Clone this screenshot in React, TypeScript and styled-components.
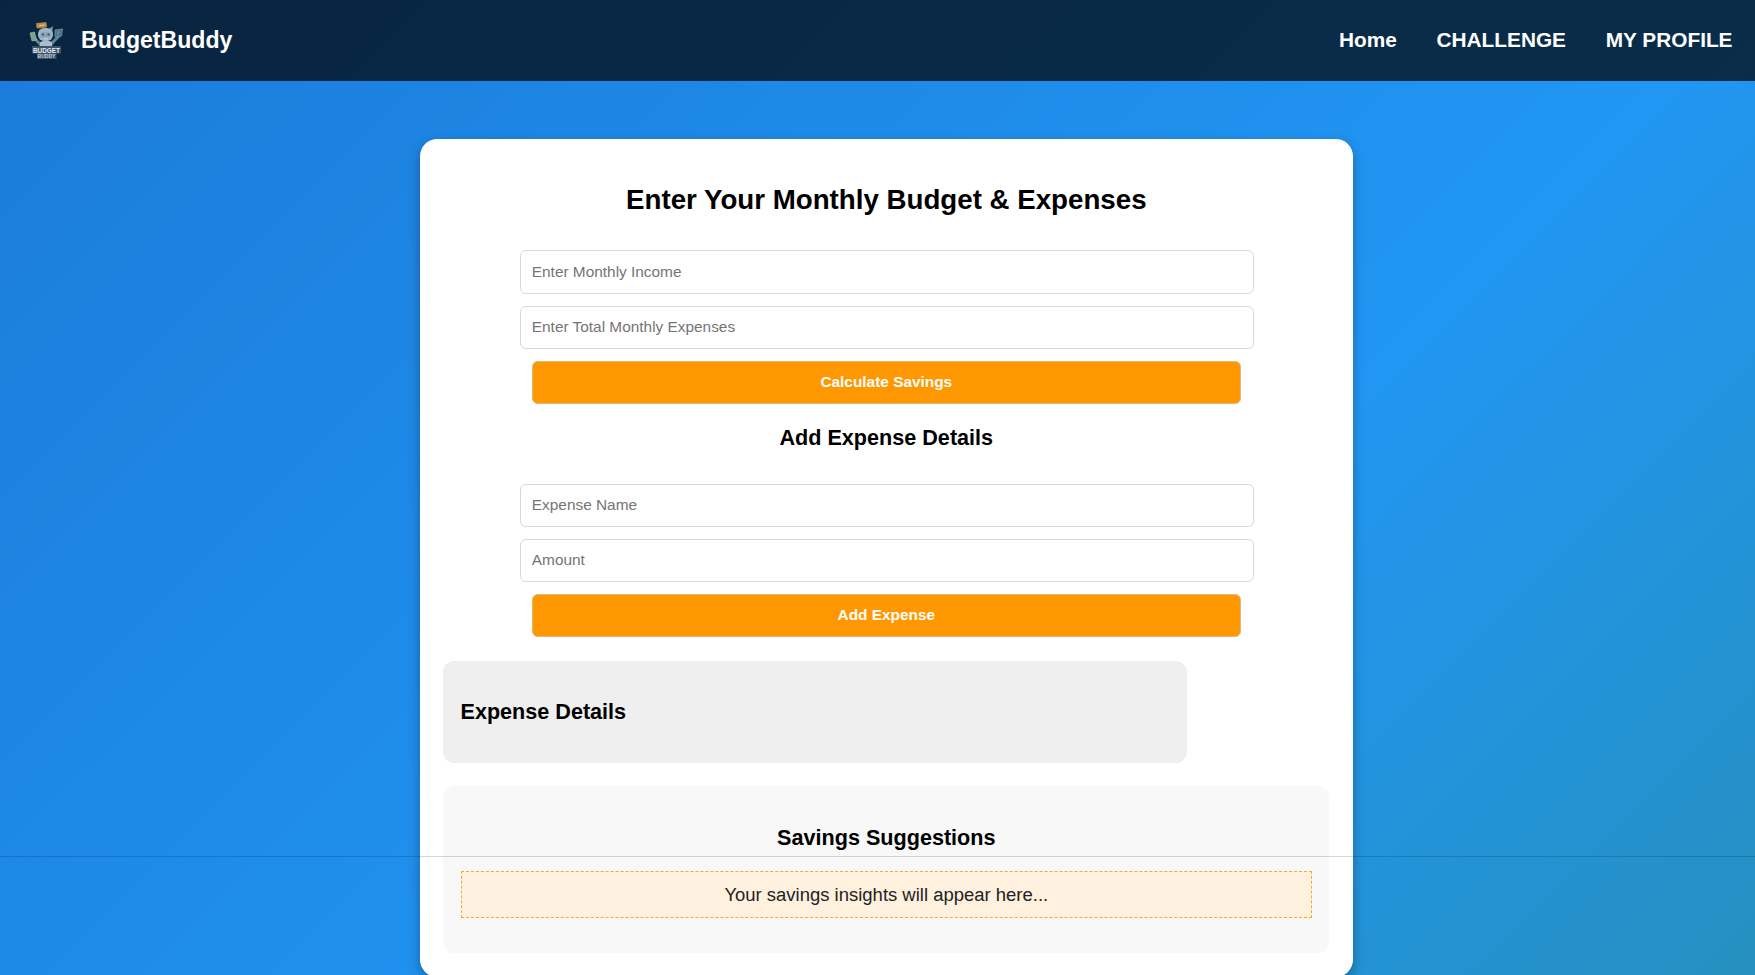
import React from "react";
import styled, { createGlobalStyle } from "styled-components";

const GlobalStyle = createGlobalStyle`
  html, body { margin: 0; padding: 0; }
  body {
    height: 975px;
    overflow: hidden;
    font-family: "Liberation Sans", Arial, sans-serif;
  }
`;

const Page = styled.div`
  position: relative;
  height: 975px;
  overflow: hidden;
  background: linear-gradient(135deg, #1b7bda 0%, #2196f3 64%, #2590c0 100%);
`;

const Navbar = styled.nav`
  display: flex;
  align-items: center;
  justify-content: space-between;
  box-sizing: border-box;
  height: 81px;
  padding: 0 22.5px 0 28px;
  background: rgba(0, 0, 0, 0.7);
`;

const Brand = styled.div`
  display: flex;
  align-items: center;
  gap: 17px;
`;

const BrandName = styled.span`
  padding-bottom: 2px;
  color: #fff;
  font-size: 23.1px;
  font-weight: 700;
  line-height: 26px;
`;

const NavLinks = styled.div`
  display: flex;
  gap: 39.8px;
  padding-bottom: 2px;
`;

const NavLink = styled.a`
  color: #fff;
  font-size: 20.8px;
  font-weight: 700;
  line-height: 24px;
  text-decoration: none;
`;

const Card = styled.main`
  display: flex;
  flex-direction: column;
  box-sizing: border-box;
  width: 932.6px;
  height: 838px;
  margin: 57.5px 0 0 420px;
  padding: 45.5px 23.2px 23px;
  border-radius: 17.3px;
  background: #fff;
  box-shadow: 0 5px 12px rgba(0, 0, 0, 0.3);
`;

const Title = styled.h2`
  margin: 0;
  font-size: 27.7px;
  line-height: 32px;
  text-align: center;
`;

const Subtitle = styled.h3`
  margin: 0;
  font-size: 21.6px;
  line-height: 25px;
`;

const Form = styled.form<{ $top: number }>`
  display: flex;
  flex-direction: column;
  align-items: center;
  gap: 11.6px;
  margin-top: ${(p) => p.$top}px;
`;

const Input = styled.input`
  box-sizing: border-box;
  width: 734px;
  height: 43.6px;
  margin-left: 1px;
  padding: 0 11px 1px;
  border: 1px solid #d8d8d8;
  border-radius: 5.8px;
  background: #fff;
  font-family: inherit;
  font-size: 15.4px;
  &::placeholder { color: #757575; }
`;

const Button = styled.button`
  box-sizing: border-box;
  width: 709px;
  height: 43.4px;
  padding: 0 0 1px;
  border: 1px solid #e0b878;
  border-radius: 5.8px;
  background: #ff9800;
  color: #fff;
  font-family: inherit;
  font-size: 15.4px;
  font-weight: 700;
`;

const SectionHeading = styled(Subtitle)`
  margin-top: 21px;
  text-align: center;
`;

const ExpensePanel = styled.section`
  display: flex;
  align-items: center;
  box-sizing: border-box;
  width: 744px;
  height: 102.4px;
  margin-top: 23.6px;
  padding: 0 17.3px 0.6px;
  border-radius: 11.5px;
  background: #efefef;
`;

const SuggestionPanel = styled.section`
  box-sizing: border-box;
  height: 167px;
  margin-top: 23.1px;
  padding: 38.3px 17.6px 0;
  border-radius: 11.5px;
  background: #f8f8f8;
  text-align: center;
`;

const Insight = styled.p`
  box-sizing: border-box;
  height: 47px;
  margin: 21px 0 0;
  border: 1px dashed #f0ab3c;
  background: #fff1de;
  color: #222;
  font-size: 18.48px;
  line-height: 45px;
`;

const FooterEdge = styled.div`
  position: absolute;
  top: 856px;
  left: 0;
  right: 0;
  height: 1px;
  background: rgba(0, 0, 0, 0.16);
`;

const LogoSvg = styled.svg`
  display: block;
  width: 36px;
  height: 40px;
  overflow: visible;
`;

const Logo = () => (
  <LogoSvg viewBox="0 0 36 40" aria-label="Budget Buddy mascot">
    <path d="M5 16l6 6 4 5M31 15l-6 6-4 5" stroke="#61849a" strokeWidth="3" fill="none" strokeLinecap="round" />
    <path d="M2 12l4.5-1 2 8-4.5 1z" fill="#78a489" stroke="#a6c3ae" strokeWidth=".6" />
    <path d="M27 9l7.5-1-1 7-6.5 1z" fill="#467086" stroke="#7697a8" strokeWidth=".8" />
    <path d="M29 11h3M29 13h2" stroke="#98b4c0" strokeWidth=".7" />
    <path d="M12 9l-1-5 1 6zM21 8l4-3-1 7z" fill="#8097a6" />
    <rect x="10" y="7" width="15" height="13" rx="6" fill="#9fb4c4" />
    <rect x="12" y="11" width="11" height="6" rx="3" fill="#8fa6b6" />
    <circle cx="15" cy="13.5" r="1.2" fill="#3f6079" />
    <circle cx="20.5" cy="13.5" r="1.2" fill="#3f6079" />
    <path d="M16 17.5q2 1 4 0" stroke="#d8e4ea" strokeWidth=".7" fill="none" />
    <path d="M12 21q6-3 12 0v7H12z" fill="#a9bfcf" />
    <path d="M8.5 2.500l9.500-1 .5 4.500-9.500 1z" fill="#bd843f" stroke="#d2a460" strokeWidth=".6" />
    <path d="M11 4.600l5.500-.6" stroke="#f0d8a8" strokeWidth=".9" />
    <path d="M4 25h29v7.500h-4.500v5.500H9v-5.500H4z" fill="#3c5468" />
    <text x="18.5" y="31.5" textAnchor="middle" textLength="27" lengthAdjust="spacingAndGlyphs" fontSize="7.4" fontWeight="700" fill="#e4ecf2">BUDGET</text>
    <text x="18.5" y="37.2" textAnchor="middle" textLength="18" lengthAdjust="spacingAndGlyphs" fontSize="5.6" fontWeight="700" fill="#c3ced8">BUDDY</text>
  </LogoSvg>
);

export default function App() {
  return (
    <>
      <GlobalStyle />
      <Page>
        <Navbar>
          <Brand>
            <Logo />
            <BrandName>BudgetBuddy</BrandName>
          </Brand>
          <NavLinks>
            <NavLink>Home</NavLink>
            <NavLink>CHALLENGE</NavLink>
            <NavLink>MY PROFILE</NavLink>
          </NavLinks>
        </Navbar>
        <Card>
          <Title>Enter Your Monthly Budget &amp; Expenses</Title>
          <Form $top={34.4}>
            <Input placeholder="Enter Monthly Income" />
            <Input placeholder="Enter Total Monthly Expenses" />
            <Button type="button">Calculate Savings</Button>
          </Form>
          <SectionHeading>Add Expense Details</SectionHeading>
          <Form $top={33.4}>
            <Input placeholder="Expense Name" />
            <Input placeholder="Amount" />
            <Button type="button">Add Expense</Button>
          </Form>
          <ExpensePanel>
            <Subtitle>Expense Details</Subtitle>
          </ExpensePanel>
          <SuggestionPanel>
            <Subtitle>Savings Suggestions</Subtitle>
            <Insight>Your savings insights will appear here...</Insight>
          </SuggestionPanel>
        </Card>
        <FooterEdge />
      </Page>
    </>
  );
}
